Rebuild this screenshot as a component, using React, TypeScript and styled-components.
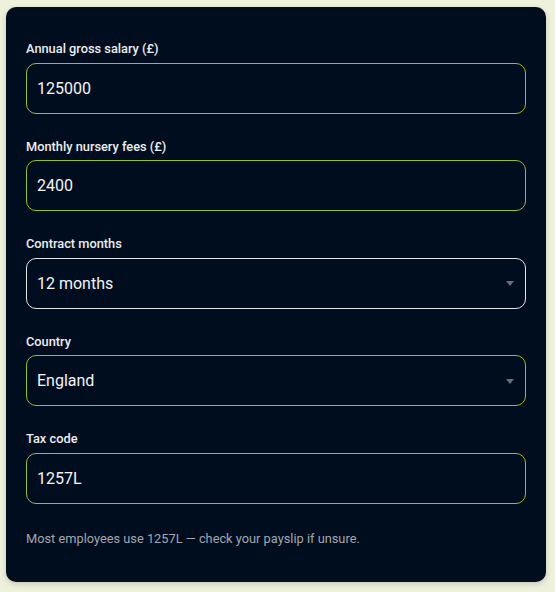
import React from 'react';
import styled, { createGlobalStyle } from 'styled-components';

const GlobalStyle = createGlobalStyle`
  html, body {
    margin: 0;
    background: #eef2dd;
    font-family: Roboto, "Liberation Sans", sans-serif;
  }
`;

const Page = styled.div`
  padding: 7px 9px 11px 6px;
`;

const Card = styled.div`
  background: #000d1f;
  border-radius: 10px;
  padding: 34px 20px 34px 20px;
  box-shadow: 0 2px 6px rgba(0, 0, 0, 0.18);
  display: flex;
  flex-direction: column;
  gap: 25px;
`;

const Field = styled.div`
  display: flex;
  flex-direction: column;
  gap: 5px;
`;

const Label = styled.label`
  color: #eceef0;
  font-size: 12.8px;
  font-weight: 500;
  line-height: 16.5px;
`;

const Box = styled.div<{ $focused?: boolean }>`
  position: relative;
  height: 51px;
  box-sizing: border-box;
  border: 1px solid ${p => (p.$focused ? '#e4e6e8' : '#94c11f')};
  border-radius: 10px;
  display: flex;
  align-items: center;
  padding: 0 10px;
  color: #f4f5f6;
  font-size: 16px;
  font-weight: 400;
`;

const Caret = styled.span`
  position: absolute;
  right: 11px;
  top: 50%;
  margin-top: -2px;
  width: 0;
  height: 0;
  border-left: 4px solid transparent;
  border-right: 4px solid transparent;
  border-top: 5px solid #6b6f75;
`;

const Hint = styled.p`
  margin: 0;
  margin-top: 1px;
  color: #a3a7ad;
  font-size: 12.8px;
  line-height: 18px;
`;

type FieldDef = { label: string; value: string; select?: boolean; focused?: boolean };

const fields: FieldDef[] = [
  { label: 'Annual gross salary (£)', value: '125000' },
  { label: 'Monthly nursery fees (£)', value: '2400' },
  { label: 'Contract months', value: '12 months', select: true, focused: true },
  { label: 'Country', value: 'England', select: true },
  { label: 'Tax code', value: '1257L' },
];

export default function App() {
  return (
    <Page>
      <GlobalStyle />
      <Card>
        {fields.map(f => (
          <Field key={f.label}>
            <Label>{f.label}</Label>
            <Box $focused={f.focused}>
              {f.value}
              {f.select && <Caret />}
            </Box>
          </Field>
        ))}
        <Hint>Most employees use 1257L — check your payslip if unsure.</Hint>
      </Card>
    </Page>
  );
}
